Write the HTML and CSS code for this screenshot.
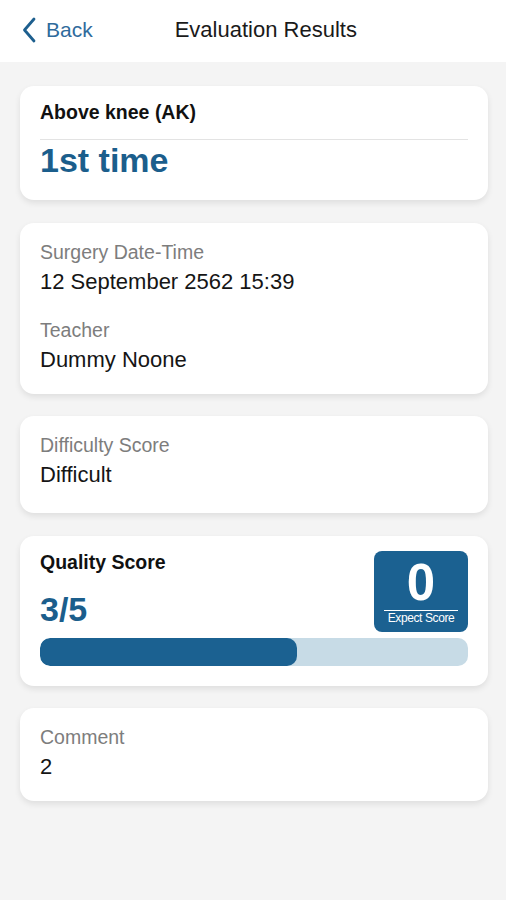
FILE: index.html
```html
<!DOCTYPE HTML>
<html>

<head>
	<meta charset="utf-8">
	<title>Evaluation Results</title>
	<link rel="stylesheet" href="styles.css">
</head>

<body>

	<header class="topbar">
		<a class="back" href="#">
			<svg class="back-icon" width="14" height="26" viewBox="0 0 14 26">
				<path d="M12 2 L2.5 13 L12 24" fill="none" stroke="#1d5f8e" stroke-width="2.8" stroke-linecap="round" stroke-linejoin="round"/>
			</svg>
			<span>Back</span>
		</a>
		<h1 class="title">Evaluation Results</h1>
	</header>

	<main class="content">
		<section class="card card-head">
			<div class="head-label">Above knee (AK)</div>
			<div class="head-value">1st time</div>
		</section>

		<section class="card">
			<div class="field">
				<div class="label">Surgery Date-Time</div>
				<div class="value">12 September 2562 15:39</div>
			</div>
			<div class="field">
				<div class="label">Teacher</div>
				<div class="value">Dummy Noone</div>
			</div>
		</section>

		<section class="card card-tall">
			<div class="field">
				<div class="label">Difficulty Score</div>
				<div class="value">Difficult</div>
			</div>
		</section>

		<section class="card card-score">
			<div class="score-row">
				<div class="score-text">
					<div class="score-label">Quality Score</div>
					<div class="score-value">3/5</div>
				</div>
				<div class="expect">
					<div class="expect-num">0</div>
					<div class="expect-label">Expect Score</div>
				</div>
			</div>
			<div class="bar">
				<div class="bar-fill" style="width: 60%"></div>
			</div>
		</section>

		<section class="card">
			<div class="field">
				<div class="label">Comment</div>
				<div class="value">2</div>
			</div>
		</section>
	</main>

</body>

</html>
```

FILE: styles.css
```css
body {
	margin: 0;
	background-color: #f4f4f4;
	font-family: "Liberation Sans", Arial, sans-serif;
	color: #111;
}

.topbar {
	height: 62px;
	background-color: #fff;
	display: flex;
	align-items: center;
	padding-left: 22px;
	padding-bottom: 2px;
	box-sizing: border-box;
}

.back {
	display: flex;
	align-items: center;
	gap: 10px;
	color: #2f6b9c;
	text-decoration: none;
	font-size: 21px;
}

.back-icon {
	display: block;
}

.title {
	margin: 0 0 0 82px;
	font-size: 22px;
	font-weight: normal;
	color: #1a1a1a;
}

.content {
	padding: 24px 18px 40px 20px;
	display: flex;
	flex-direction: column;
	gap: 22.5px;
}

.card {
	background-color: #fff;
	border-radius: 14px;
	box-shadow: 0 3px 6px rgba(0, 0, 0, 0.09);
	padding: 18px 20px 22px;
	display: flex;
	flex-direction: column;
	gap: 25px;
}

.card-tall {
	padding-bottom: 26px;
}

.card-head {
	padding: 15px 20px 20px;
	gap: 0;
}

.head-label {
	font-size: 19.5px;
	font-weight: bold;
	line-height: 23px;
	padding-bottom: 15px;
	border-bottom: 1px solid #e3e3e3;
}

.head-value {
	font-size: 34px;
	font-weight: bold;
	color: #1b5e8c;
	line-height: 40px;
}

.label {
	font-size: 19.5px;
	color: #7d7d7d;
	line-height: 23px;
	margin-bottom: 6px;
}

.value {
	font-size: 22px;
	line-height: 24px;
	color: #151515;
}

.card-score {
	padding: 15px 20px 20px;
	gap: 6px;
}

.score-row {
	display: flex;
	justify-content: space-between;
}

.score-text {
	display: flex;
	flex-direction: column;
	gap: 15px;
}

.score-label {
	font-size: 19.5px;
	font-weight: bold;
	line-height: 23px;
}

.score-value {
	font-size: 34px;
	font-weight: bold;
	color: #1b5e8c;
	line-height: 40px;
}

.expect {
	width: 94px;
	height: 81px;
	background-color: #1b6191;
	border-radius: 8px;
	color: #fff;
	display: flex;
	flex-direction: column;
	align-items: center;
}

.expect-num {
	font-size: 51px;
	font-weight: bold;
	line-height: 52px;
	margin-top: 6px;
}

.expect-label {
	font-size: 12px;
	line-height: 14px;
	letter-spacing: -0.4px;
	border-top: 1px solid #fff;
	margin-top: 1px;
	width: 74px;
	text-align: center;
}

.bar {
	height: 28px;
	border-radius: 10px;
	background-color: #c7dbe6;
	overflow: hidden;
}

.bar-fill {
	height: 100%;
	background-color: #1b6191;
	border-radius: 10px;
}
```
